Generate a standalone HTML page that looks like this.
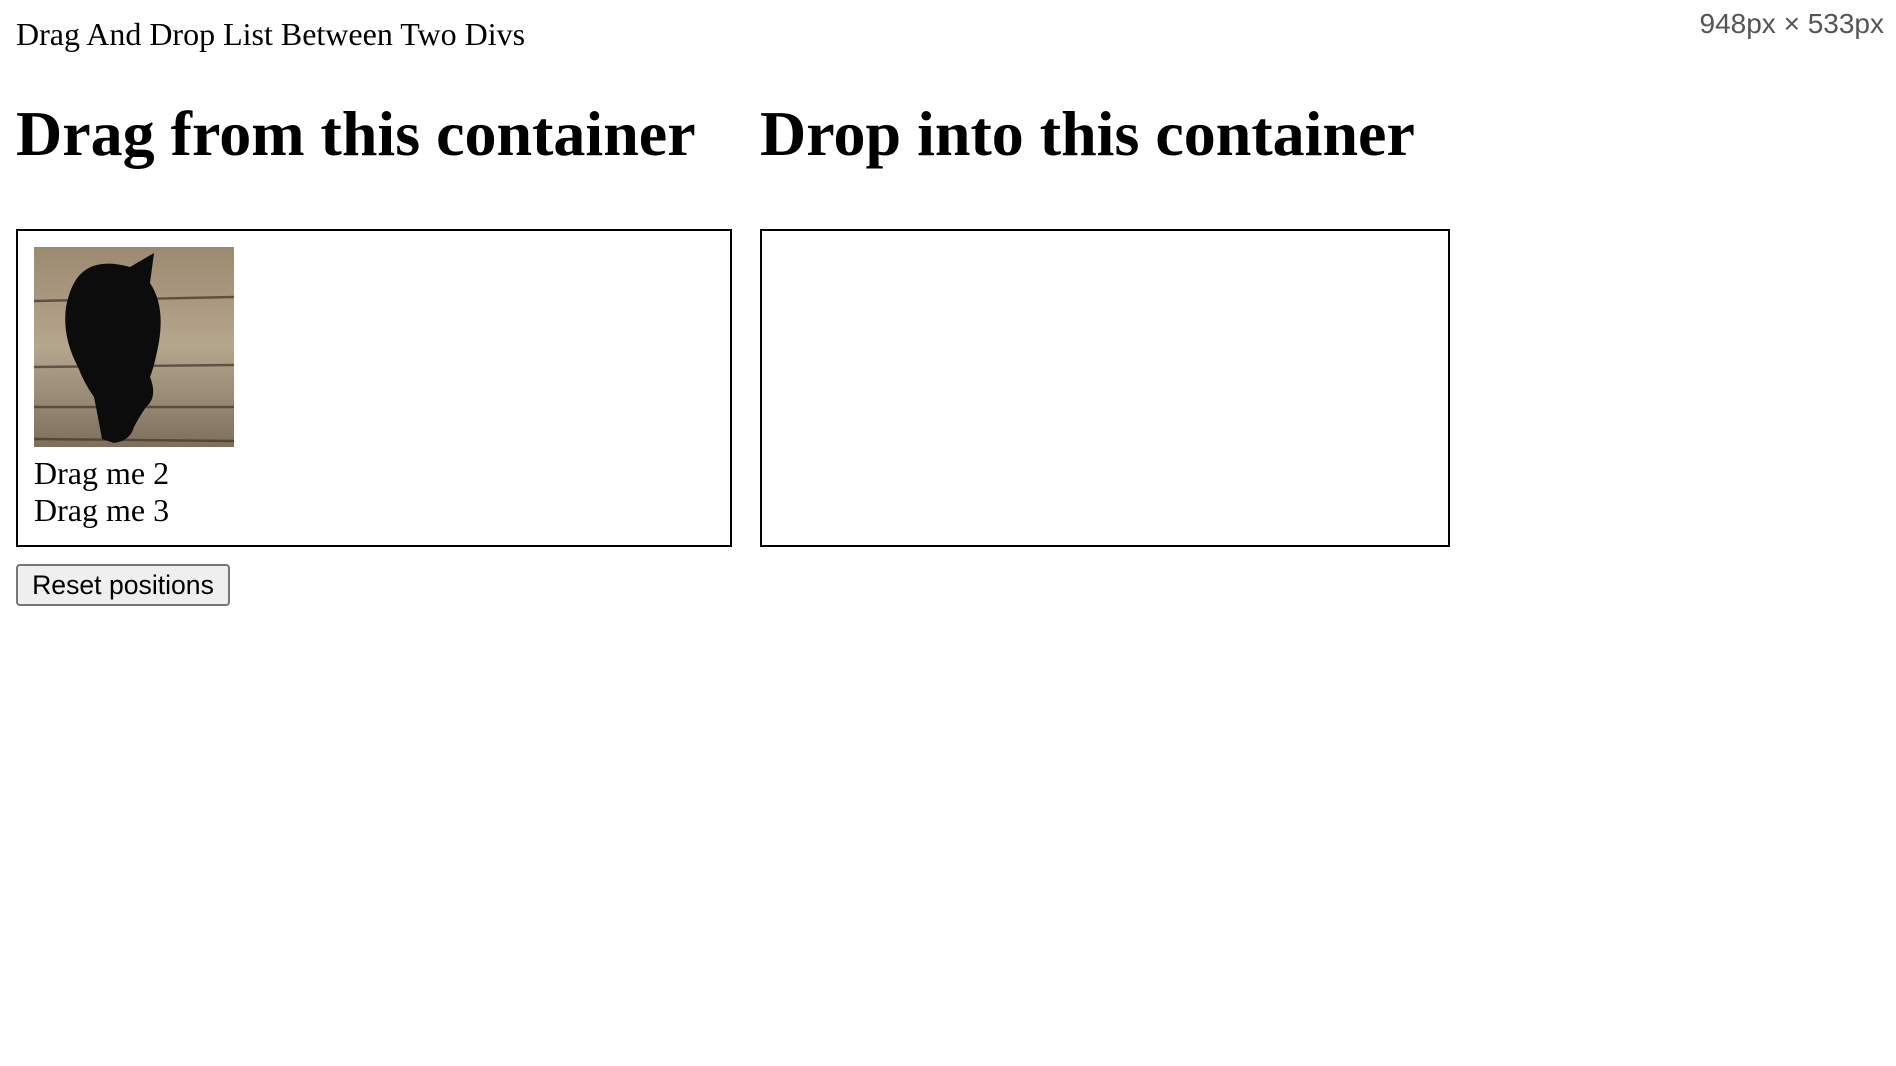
<!DOCTYPE html>
<html><head><meta charset="utf-8"><style>
html{zoom:2}
body{margin:0;width:948px;height:533px;position:relative;font-family:"Liberation Serif",serif;background:#fff;color:#000;overflow:hidden}
.t{position:absolute;left:8px;top:8px;font-size:16px}
h1{position:absolute;margin:0;font-size:32px;font-weight:bold;top:47px;line-height:40px}
.box{position:absolute;top:114.5px;height:157px;border:1px solid #000;box-sizing:content-box}
.items{position:absolute;left:8px;top:8px;font-size:16px;line-height:18.7px}
.dim{position:fixed;right:6px;top:4px;font-family:"Liberation Sans",sans-serif;font-size:14px;color:#555}
button{position:absolute;left:8px;top:282px;width:107px;height:21px;font-family:"Liberation Sans",sans-serif;font-size:13.3px;background:#efefef;border:1px solid #767676;border-radius:2px;padding:0;color:#000}
</style></head><body>
<div class="t">Drag And Drop List Between Two Divs</div>
<div class="dim">948px × 533px</div>
<h1 style="left:8px">Drag from this container</h1>
<h1 style="left:380px">Drop into this container</h1>
<div class="box" style="left:8px;width:356px"><div class="items">
<svg width="100" height="100" style="display:block">
<defs><linearGradient id="w" x1="0" y1="0" x2="0" y2="1"><stop offset="0" stop-color="#9c8a70"/><stop offset=".5" stop-color="#b5a68e"/><stop offset="1" stop-color="#7d6f5c"/></linearGradient></defs>
<rect width="100" height="100" fill="url(#w)"/>
<g stroke="#3e3428" stroke-width="1.2" opacity=".7"><line x1="0" y1="27" x2="100" y2="25"/><line x1="0" y1="60" x2="100" y2="59"/><line x1="0" y1="80" x2="100" y2="80"/><line x1="0" y1="96" x2="100" y2="97"/></g>
<path d="M22 15 Q30 5 48 10 L60 3 L58 18 Q66 30 62 50 Q60 60 58 65 Q62 75 56 80 Q52 86 50 90 Q48 97 40 98 L34 96 Q32 85 30 75 Q25 68 22 60 Q14 45 16 30 Q18 20 22 15Z" fill="#0c0c0c"/>
</svg>
<div style="margin-top:4px">Drag me 2</div><div>Drag me 3</div></div></div>
<div class="box" style="left:380px;width:343px"></div>
<button>Reset positions</button>
</body></html>
